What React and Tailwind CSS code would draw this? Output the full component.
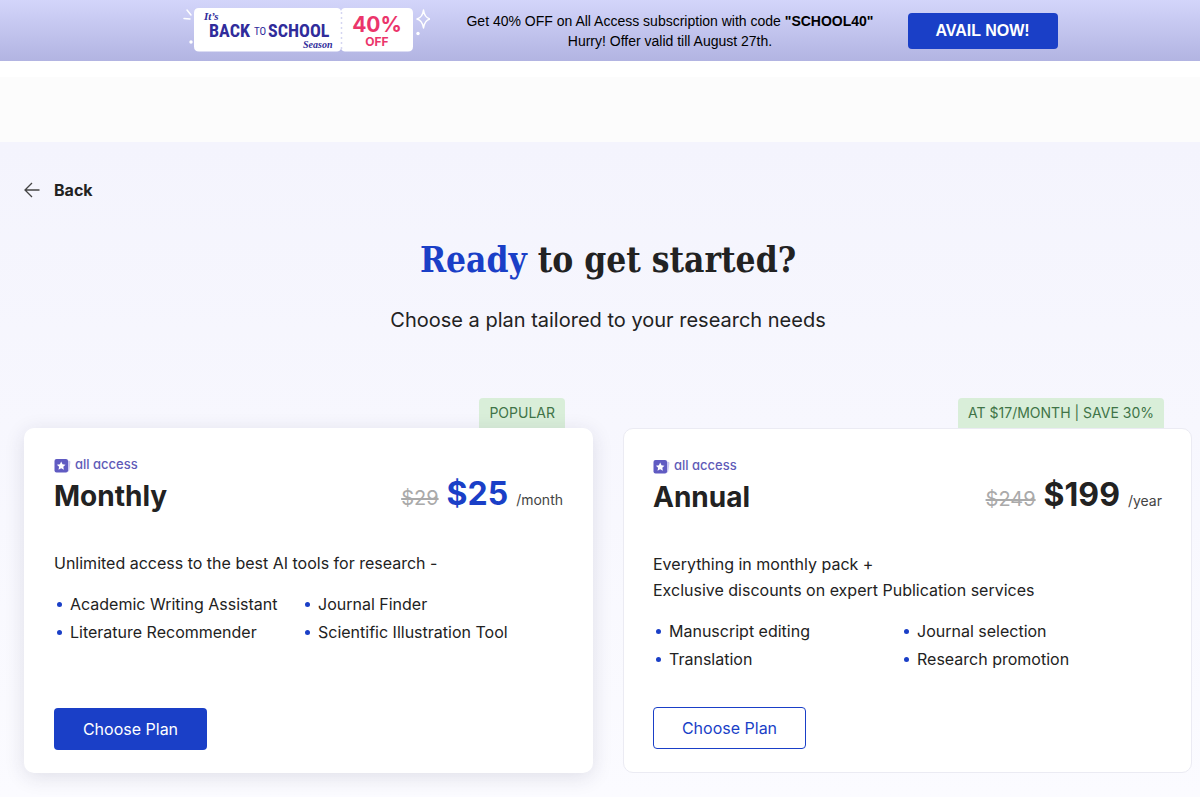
const plans = [
  {
    name: 'Monthly',
    tag: 'POPULAR',
    oldPrice: '$29',
    price: '$25',
    period: '/month',
    intro: ['Unlimited access to the best AI tools for research -'],
    features: ['Academic Writing Assistant', 'Journal Finder', 'Literature Recommender', 'Scientific Illustration Tool'],
    popular: true,
  },
  {
    name: 'Annual',
    tag: 'AT $17/MONTH | SAVE 30%',
    oldPrice: '$249',
    price: '$199',
    period: '/year',
    intro: ['Everything in monthly pack +', 'Exclusive discounts on expert Publication services'],
    features: ['Manuscript editing', 'Journal selection', 'Translation', 'Research promotion'],
    popular: false,
  },
]

// Ticket-shaped promo logo
function PromoLogo() {
  return (
    <svg width="250" height="48" viewBox="0 1 250 48" role="img" aria-label="Back to School Season 40% off">
      <g stroke="#fff" strokeWidth="1.5" strokeLinecap="round">
        <path d="M7 4l4 5M4 12.500l6 .5" />
      </g>
      <circle cx="11" cy="36" r="1.700" fill="#fff" />
      <circle cx="238" cy="27.500" r="1.700" fill="#fff" />
      <path d="M243.500 4q1 7.500 6.500 9q-5.500 1.500-6.500 9q-1-7.500-6.500-9q5.500-1.500 6.500-9z" fill="none" stroke="#fff" strokeWidth="1.500" strokeLinejoin="round" />
      <path d="M19 2h138q3 0 4 3q1-3 4-3h63q5 0 5 5v33.500q0 5-5 5h-63q-3 0-4-3q-1 3-4 3H19q-5 0-5-5V7q0-5 5-5z" fill="#fff" />
      <path d="M161.500 6v37" stroke="#d5d6f1" strokeWidth="1.500" strokeDasharray="2 3" />
      <g fill="#302c9b">
        <text x="24" y="14" fontFamily="'Liberation Serif', serif" fontStyle="italic" fontWeight="700" fontSize="11">It’s</text>
        <text x="29" y="31" fontFamily="'Roboto Condensed', Roboto, sans-serif" fontWeight="700" fontSize="18">BACK</text>
        <text x="74" y="29" fontFamily="'Roboto Condensed', Roboto, sans-serif" fontSize="11">TO</text>
        <text x="88" y="31" fontFamily="'Roboto Condensed', Roboto, sans-serif" fontWeight="700" fontSize="18">SCHOOL</text>
        <text x="123" y="42" fontFamily="'Liberation Serif', serif" fontStyle="italic" fontWeight="700" fontSize="10">Season</text>
      </g>
      <g fill="#eb356b" fontFamily="Inter, sans-serif" fontWeight="700" textAnchor="middle">
        <text x="197" y="26" fontSize="21">40%</text>
        <text x="197" y="40" fontSize="12">OFF</text>
      </g>
    </svg>
  )
}

function AccessIcon() {
  return (
    <svg width="17" height="15" viewBox="0 0 17 15" aria-hidden="true">
      <rect x="4" y="2" width="12" height="11" rx="1.500" fill="#c9c6f0" transform="rotate(8 10 7)" />
      <rect x="0.500" y="1" width="13.500" height="13.500" rx="2" fill="#605bc2" />
      <path d="M7.200 3.500l1.300 2.800 3 .4-2.200 2 .6 3-2.700-1.500-2.700 1.500.6-3-2.200-2 3-.4z" fill="#fff" />
    </svg>
  )
}

function PlanCard({ plan }) {
  return (
    <article className="flex-1 flex flex-col">
      <div className="self-end mr-7 px-[10px] h-[30px] leading-[30px] rounded-t bg-[#d9eed9] text-[#3f7447] text-sm">
        {plan.tag}
      </div>
      <div
        className={
          plan.popular
            ? 'flex-1 flex flex-col items-start px-[30px] pt-[29px] pb-[23px] rounded-[10px] bg-white shadow-[0_4px_20px_rgba(40,40,80,0.13)]'
            : 'flex-1 flex flex-col items-start px-[29px] pt-[29px] pb-[23px] rounded-[10px] bg-white border border-[#ebebf3]'
        }
      >
        <div className="w-full flex items-end justify-between">
          <div>
            <div className="flex items-center gap-1 h-4 text-[13px] font-medium text-[#605bb8] [font-feature-settings:'cv11']">
              <AccessIcon />
              all access
            </div>
            <h2 className="mt-[5px] text-[28px] leading-9 font-bold">{plan.name}</h2>
          </div>
          <p className="flex items-baseline gap-2 mb-[2px] leading-9">
            <s className="text-xl text-[#aaaaaa]">{plan.oldPrice}</s>
            <strong className={plan.popular ? 'text-[32px] font-bold text-[#1a3fc7]' : 'text-[32px] font-bold'}>
              {plan.price}
            </strong>
            <span className="text-sm text-[#444444]">{plan.period}</span>
          </p>
        </div>
        <div className="mt-9 leading-[26px]">
          {plan.intro.map((line) => (
            <p key={line}>{line}</p>
          ))}
        </div>
        <ul className="mt-[14px] mb-[34px] grid grid-cols-[248px_auto] leading-7">
          {plan.features.map((f) => (
            <li key={f} className="flex items-center gap-2 pl-[3px]">
              <span className="w-[5px] h-[5px] rounded-full bg-[#1a3fc7]" />
              {f}
            </li>
          ))}
        </ul>
        <button
          type="button"
          className={
            plan.popular
              ? 'mt-auto w-[153px] h-[42px] rounded bg-[#1a3fc7] text-white'
              : 'mt-auto w-[153px] h-[42px] rounded border border-[#1a3fc7] text-[#1a3fc7]'
          }
        >
          Choose Plan
        </button>
      </div>
    </article>
  )
}

export default function App() {
  return (
    <div className="min-h-screen flex flex-col bg-white font-[Inter,sans-serif] text-[#222222]">
      <header className="h-[61px] flex items-center justify-center pl-[38px] bg-linear-to-b from-[#d3d5fa] to-[#b2b4e2]">
        <PromoLogo />
        <p className="ml-9 text-center text-sm leading-5 text-black font-['Liberation_Sans',sans-serif]">
          Get 40% OFF on All Access subscription with code <b>"SCHOOL40"</b>
          <br />
          Hurry! Offer valid till August 27th.
        </p>
        <button
          type="button"
          className="ml-[34px] w-[150px] h-9 rounded bg-[#1a3fc7] text-white text-base font-bold font-['Liberation_Sans',sans-serif]"
        >
          AVAIL NOW!
        </button>
      </header>
      <div className="mt-4 h-[65px] bg-[#fcfcfc]" />
      <main className="flex-1 pt-9 pb-6 pl-6 pr-2 bg-linear-to-b from-[#f4f4fd] to-[#fbfbff]">
        <a href="#" className="inline-flex items-center gap-[14px] h-6 font-bold">
          <svg width="16" height="16" viewBox="0 0 16 16" fill="none" stroke="#444" strokeWidth="1.3" aria-hidden="true">
            <path d="M15.500 8H1M8 1L1 8l7 7" />
          </svg>
          Back
        </a>
        <h1 className="mt-[30px] text-center text-[35px] leading-[52px] font-bold font-['DejaVu_Serif_Condensed','DejaVu_Serif',serif]">
          <span className="text-[#1a3fc7]">Ready</span> to get started?
        </h1>
        <p className="mt-[18px] text-center text-xl leading-8">Choose a plan tailored to your research needs</p>
        <div className="mt-[62px] flex gap-[30px]">
          {plans.map((plan) => (
            <PlanCard key={plan.name} plan={plan} />
          ))}
        </div>
      </main>
    </div>
  )
}
